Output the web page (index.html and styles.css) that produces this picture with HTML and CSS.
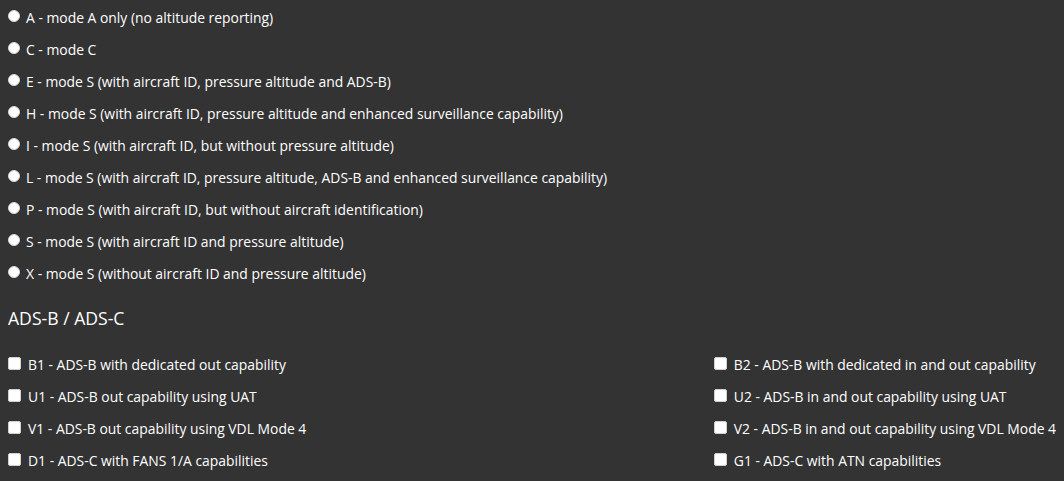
FILE: index.html
```html
<!DOCTYPE html>
<html>
<head>
<meta charset="utf-8">
<link rel="stylesheet" href="styles.css">
</head>
<body>
<div class="radios">
  <label class="opt"><span class="radio"></span><span>A - mode A only (no altitude reporting)</span></label>
  <label class="opt"><span class="radio"></span><span>C - mode C</span></label>
  <label class="opt"><span class="radio"></span><span>E - mode S (with aircraft ID, pressure altitude and ADS-B)</span></label>
  <label class="opt"><span class="radio"></span><span>H - mode S (with aircraft ID, pressure altitude and enhanced surveillance capability)</span></label>
  <label class="opt"><span class="radio"></span><span>I - mode S (with aircraft ID, but without pressure altitude)</span></label>
  <label class="opt"><span class="radio"></span><span>L - mode S (with aircraft ID, pressure altitude, ADS-B and enhanced surveillance capability)</span></label>
  <label class="opt"><span class="radio"></span><span>P - mode S (with aircraft ID, but without aircraft identification)</span></label>
  <label class="opt"><span class="radio"></span><span>S - mode S (with aircraft ID and pressure altitude)</span></label>
  <label class="opt"><span class="radio"></span><span>X - mode S (without aircraft ID and pressure altitude)</span></label>
</div>
<h3 class="heading">ADS-B / ADS-C</h3>
<div class="checks">
  <div class="col">
    <label class="opt"><span class="box"></span><span>B1 - ADS-B with dedicated out capability</span></label>
    <label class="opt"><span class="box"></span><span>U1 - ADS-B out capability using UAT</span></label>
    <label class="opt"><span class="box"></span><span>V1 - ADS-B out capability using VDL Mode 4</span></label>
    <label class="opt"><span class="box"></span><span>D1 - ADS-C with FANS 1/A capabilities</span></label>
  </div>
  <div class="col">
    <label class="opt"><span class="box"></span><span>B2 - ADS-B with dedicated in and out capability</span></label>
    <label class="opt"><span class="box"></span><span>U2 - ADS-B in and out capability using UAT</span></label>
    <label class="opt"><span class="box"></span><span>V2 - ADS-B in and out capability using VDL Mode 4</span></label>
    <label class="opt"><span class="box"></span><span>G1 - ADS-C with ATN capabilities</span></label>
  </div>
</div>
</body>
</html>
```

FILE: styles.css
```css
html, body {
  background: #333333;
}
body {
  margin: 8px;
  color: #ffffff;
  font-family: "Open Sans", "DejaVu Sans", sans-serif;
  font-size: 13.9px;
}
.radios {
  display: flex;
  flex-direction: column;
  gap: 12px;
}
.opt {
  display: flex;
  align-items: flex-start;
  height: 20px;
  line-height: 20px;
  gap: 6px;
  white-space: nowrap;
}
.radio {
  flex: none;
  width: 12px;
  height: 12px;
  margin-top: 2px;
  border-radius: 50%;
  background: #ffffff;
  box-sizing: border-box;
  border: 1px solid #d8d8d8;
}
.box {
  flex: none;
  width: 13px;
  height: 13px;
  margin-top: 2px;
  border-radius: 2px;
  background: #ffffff;
  box-sizing: border-box;
  border: 1px solid #d0d0d0;
}
.heading {
  margin: 22px 0 0;
  font-size: 17.6px;
  font-weight: 400;
  line-height: 24px;
}
.checks {
  display: flex;
  justify-content: space-between;
  margin-top: 25px;
}
.col {
  display: flex;
  flex-direction: column;
  gap: 12px;
}
.col .opt {
  gap: 7px;
}
```
